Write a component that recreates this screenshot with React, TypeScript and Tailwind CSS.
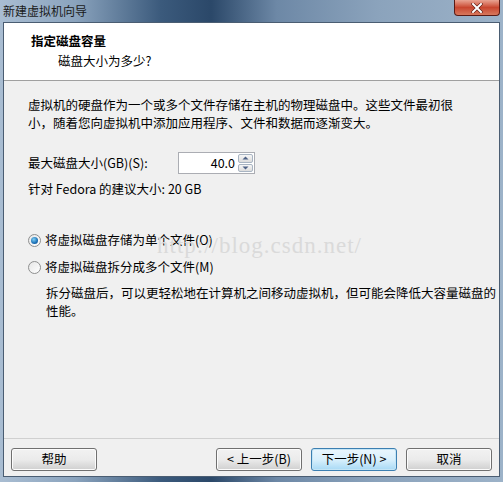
import React from "react";

const font = { fontFamily: '"Noto Sans CJK SC", "Noto Sans", sans-serif' };

function Btn({ children, primary }: { children: React.ReactNode; primary?: boolean }) {
  return (
    <div
      className={
        "w-[86px] h-[23px] rounded-[3px] border flex items-center justify-center text-[12.5px] text-black leading-none " +
        (primary
          ? "border-[#3c7fb1] bg-gradient-to-b from-[#eaf6fd] via-[#d9f0fc] to-[#a7d9f5] shadow-[inset_0_0_0_1px_#c4e5f6]"
          : "border-[#707070] bg-gradient-to-b from-[#f2f2f2] via-[#ebebeb] to-[#cfcfcf] shadow-[inset_0_0_0_1px_#fcfcfc]")
      }
    >
      {children}
    </div>
  );
}

function Radio({ checked }: { checked?: boolean }) {
  return (
    <div className="w-[13px] h-[13px] rounded-full border border-[#8e8f8f] bg-gradient-to-br from-[#e6e6e6] to-[#ffffff] flex items-center justify-center">
      {checked && (
        <div className="w-[7px] h-[7px] rounded-full bg-[radial-gradient(circle_at_40%_35%,#7fd0f5,#1b6fb5_60%,#0e4b8a)]" />
      )}
    </div>
  );
}

export default function App() {
  return (
    <div
      className="w-[503px] h-[482px] flex flex-col bg-[linear-gradient(90deg,#a9bdd2_0%,#8aa3bd_15%,#3b5a7c_32%,#2b4869_42%,#6d88a6_55%,#8ba3bc_75%,#9cb2c8_100%)] overflow-hidden"
      style={font}
    >
      {/* title bar */}
      <div className="h-[22px] flex items-start justify-between">
        <div className="pl-[3px] pt-[1px] text-[12px] leading-[20px] text-[#1a1a1a]">新建虚拟机向导</div>
        <div className="mr-[3px] w-[46px] h-[16px] rounded-b-[4px] border border-t-0 border-[#5a1a14] bg-gradient-to-b from-[#e8a493] via-[#c8462f] to-[#d7775c] flex items-center justify-center">
          <svg width="12" height="10" viewBox="0 0 12 10">
            <path d="M2 1 L10 9 M10 1 L2 9" stroke="#5a1a10" strokeWidth="3.2" strokeLinecap="square" />
            <path d="M2 1 L10 9 M10 1 L2 9" stroke="#ffffff" strokeWidth="2" strokeLinecap="square" />
          </svg>
        </div>
      </div>

      {/* client */}
      <div className="flex-1 mx-[3px] mb-[5px] border border-[#4a5d72] flex flex-col bg-[#f0f0f0]">
        {/* header */}
        <div className="h-[58px] bg-white border-b border-[#a0a0a0] shrink-0">
          <div className="pl-[27px] pt-[9px] text-[12.5px] leading-[17px] font-bold text-black">指定磁盘容量</div>
          <div className="pl-[54px] pt-[3px] text-[12.5px] leading-[17px] text-black">磁盘大小为多少?</div>
        </div>

        {/* body */}
        <div className="flex-1 relative pl-[24px] pt-[15px] text-[12.5px] text-black">
          <div className="leading-[18px] whitespace-nowrap">
            <div>虚拟机的硬盘作为一个或多个文件存储在主机的物理磁盘中。这些文件最初很</div>
            <div>小，随着您向虚拟机中添加应用程序、文件和数据而逐渐变大。</div>
          </div>

          <div className="mt-[20px] flex items-center h-[22px]">
            <div className="w-[150px] leading-[16px]">最大磁盘大小(GB)(S):</div>
            <div className="w-[77px] h-[22px] bg-white border border-[#abadb3] flex items-center">
              <div className="flex-1 text-right pr-[3px] leading-none">40.0</div>
              <div className="w-[16px] h-[20px] flex flex-col gap-[1px] pr-[1px] py-[1px]">
                <div className="flex-1 border border-[#a8b4c2] rounded-[2px] bg-gradient-to-b from-[#f6f6f6] to-[#dcdcdc] flex items-center justify-center">
                  <svg width="7" height="4" viewBox="0 0 7 4"><path d="M0.5 3.5 L3.5 0.5 L6.5 3.5 Z" fill="#4d6185" /></svg>
                </div>
                <div className="flex-1 border border-[#a8b4c2] rounded-[2px] bg-gradient-to-b from-[#f6f6f6] to-[#dcdcdc] flex items-center justify-center">
                  <svg width="7" height="4" viewBox="0 0 7 4"><path d="M0.5 0.5 L3.5 3.5 L6.5 0.5 Z" fill="#4d6185" /></svg>
                </div>
              </div>
            </div>
          </div>

          <div className="mt-[7px] leading-[16px]">针对 Fedora 的建议大小: 20 GB</div>

          <div className="mt-[35px] flex items-center gap-[4px] leading-[16px]">
            <Radio checked />
            <span>将虚拟磁盘存储为单个文件(O)</span>
          </div>
          <div className="mt-[11px] flex items-center gap-[4px] leading-[16px]">
            <Radio />
            <span>将虚拟磁盘拆分成多个文件(M)</span>
          </div>
          <div className="mt-[9px] pl-[18px] leading-[18px] whitespace-nowrap">
            <div>拆分磁盘后，可以更轻松地在计算机之间移动虚拟机，但可能会降低大容量磁盘的</div>
            <div>性能。</div>
          </div>

          <div
            className="absolute left-[153px] top-[153px] text-[23px] text-[#dadada] leading-none tracking-[1px] pointer-events-none"
            style={{ fontFamily: '"Liberation Serif", serif' }}
          >
            http://blog.csdn.net/
          </div>
        </div>

        {/* footer */}
        <div className="h-[38px] border-t border-[#d0d0d0] shrink-0 flex items-start pt-[9px] px-[7px]">
          <Btn>帮助</Btn>
          <div className="flex-1" />
          <div className="flex gap-[9px]">
            <Btn>&lt; 上一步(B)</Btn>
            <Btn primary>下一步(N) &gt;</Btn>
            <Btn>取消</Btn>
          </div>
        </div>
      </div>
    </div>
  );
}
